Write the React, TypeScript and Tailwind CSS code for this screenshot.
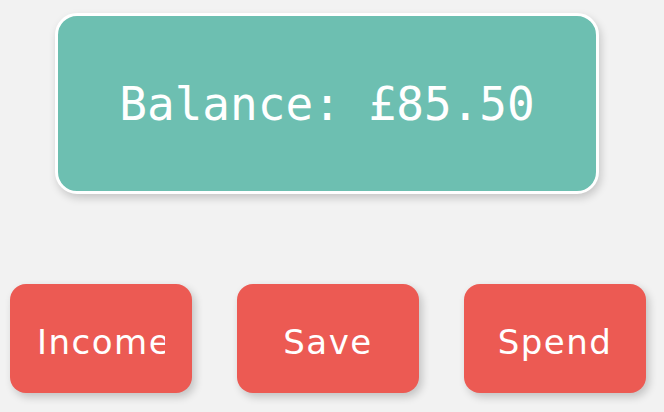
import React from "react";

export default function App() {
  const btns = ["Income", "Save", "Spend"];
  return (
    <div className="w-[664px] h-[412px] bg-[#f2f2f2] overflow-hidden">
      <div className="pt-[13px] pl-[55px]">
        <div
          className="w-[544px] h-[181px] rounded-[22px] border-[3px] border-white bg-[#6dbfb1] flex items-center justify-center shadow-[2px_4px_8px_rgba(0,0,0,0.18)]"
        >
          <span
            className="text-white text-[46px] leading-none"
            style={{ fontFamily: '"DejaVu Sans Mono", monospace' }}
          >
            Balance: £85.50
          </span>
        </div>
      </div>
      <div className="mt-[90px] pl-[10px] flex gap-[45px]">
        {btns.map((b) => (
          <div
            key={b}
            className="w-[182px] h-[109px] rounded-[16px] bg-[#ec5a53] flex items-center justify-center px-[27px] pt-[8px] shadow-[3px_4px_8px_rgba(0,0,0,0.2)]"
          >
            <div
              className="w-full overflow-hidden whitespace-nowrap text-center text-white text-[34px] tracking-[1.5px] leading-[1.3]"
              style={{ fontFamily: '"DejaVu Sans", sans-serif' }}
            >
              {b}
            </div>
          </div>
        ))}
      </div>
    </div>
  );
}
